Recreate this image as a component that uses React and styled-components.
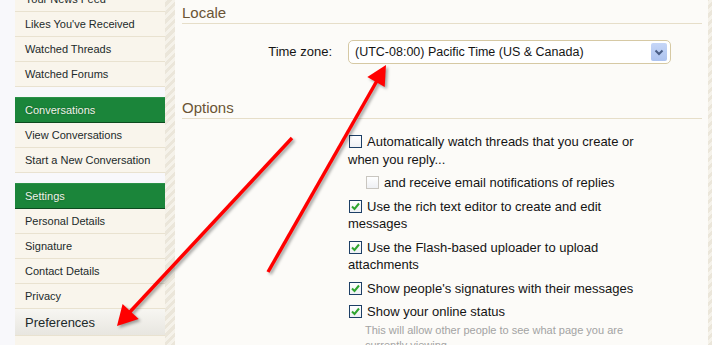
import React from "react";
import styled, { createGlobalStyle } from "styled-components";

// sidebar menu content
const sections = [
  {
    title: null,
    items: ["Your News Feed", "Likes You've Received", "Watched Threads", "Watched Forums"],
  },
  {
    title: "Conversations",
    items: ["View Conversations", "Start a New Conversation"],
  },
  {
    title: "Settings",
    items: ["Personal Details", "Signature", "Contact Details", "Privacy", "Preferences", ""],
  },
];

const options = [
  { text: "Automatically watch threads that you create or when you reply...", checked: false },
  { text: "and receive email notifications of replies", checked: false, nested: true },
  { text: "Use the rich text editor to create and edit messages", checked: true },
  { text: "Use the Flash-based uploader to upload attachments", checked: true },
  { text: "Show people's signatures with their messages", checked: true },
  {
    text: "Show your online status",
    checked: true,
    hint: "This will allow other people to see what page you are currently viewing.",
  },
];

const GlobalStyle = createGlobalStyle`
  html, body {
    margin: 0;
    padding: 0;
  }
  body {
    background: #f8f8fb;
    font-family: "Liberation Sans", Arial, sans-serif;
    overflow: hidden;
  }
`;

const Page = styled.div`
  position: relative;
  display: flex;
  height: 345px;
  padding-left: 15px;
  overflow: hidden;
`;

const Sidebar = styled.nav`
  width: 150px;
  flex-shrink: 0;
  margin-top: -13px;
`;

const Section = styled.ul`
  list-style: none;
  margin: 0 0 10px;
  padding: 0;
`;

const SectionHead = styled.li`
  height: 24px;
  line-height: 24px;
  padding-left: 10px;
  background: #1b853a;
  border-top: 1px solid #2a9147;
  border-bottom: 1px solid #0d4a1f;
  color: #eef4e8;
  font-size: 11px;
  text-shadow: 0 0 2px rgba(0, 0, 0, 0.35);
`;

const NavItem = styled.li`
  height: ${(p) => (p.$selected ? 26 : 24)}px;
  line-height: ${(p) => (p.$selected ? 27 : 24)}px;
  padding-left: 10px;
  border-bottom: 1px solid #e9e2d0;
  background: ${(p) =>
    p.$selected ? "linear-gradient(#f7f6f2, #e8e6e0)" : "#f9f5ec"};
  color: #1c2a2a;
  font-size: ${(p) => (p.$selected ? 13 : 11)}px;
  white-space: nowrap;
`;

const Stripe = styled.div`
  width: ${(p) => p.$w}px;
  flex-shrink: 0;
  background: repeating-linear-gradient(
    -45deg,
    #ebe6da 0 3px,
    #f5f2ea 3px 6px
  );
`;

const Main = styled.main`
  flex: 1;
  background: #fcfbf8;
  padding: 0 6px 0 7px;
`;

const Heading = styled.h3`
  margin: 0;
  padding: 3px 0 1px;
  line-height: 19px;
  font-size: 15px;
  font-weight: normal;
  color: #6a5434;
  border-bottom: 1px solid #e6dec9;
`;

const FormRow = styled.dl`
  display: grid;
  grid-template-columns: 150px 1fr;
  column-gap: 16px;
  margin: ${(p) => p.$margin};
`;

const Label = styled.dt`
  text-align: right;
  font-size: 13px;
  line-height: 24px;
  color: #141414;
`;

const Control = styled.dd`
  margin: 0;
`;

const Select = styled.div`
  box-sizing: border-box;
  width: 323px;
  height: 24px;
  display: flex;
  align-items: center;
  justify-content: space-between;
  padding: 0 3px 0 6px;
  border: 1px solid #d6c9a4;
  border-radius: 5px;
  background: #fff;
  font-size: 12.5px;
  color: #141414;
`;

const DropButton = styled.span`
  width: 16px;
  height: 18px;
  display: flex;
  align-items: center;
  justify-content: center;
  border-radius: 2px;
  background: linear-gradient(#c6d6f7, #adc3ef);
`;

const OptionList = styled.ul`
  list-style: none;
  margin: 0;
  padding: 0;
  max-width: 300px;
`;

const Option = styled.li`
  margin: 0 0 6px;
  padding-left: ${(p) => (p.$nested ? 17 : 0)}px;
  font-size: 13px;
  line-height: 17.5px;
  color: #141414;
`;

const Box = styled.span`
  display: inline-block;
  width: 11px;
  height: 11px;
  margin: 0 5px 0 1px;
  vertical-align: -2px;
  background: linear-gradient(#ffffff, #eef0f4);
  border: 1px solid ${(p) => (p.$disabled ? "#c9c6c0" : "#1d3f66")};
  position: relative;
`;

const Hint = styled.div`
  margin: 2px 0 0 17px;
  font-size: 11px;
  line-height: 15px;
  color: #a3a3a3;
`;

const Overlay = styled.svg`
  position: absolute;
  top: 0;
  left: 0;
  pointer-events: none;
  filter: drop-shadow(2px 2px 1.5px rgba(0, 0, 0, 0.35));
`;

function Check() {
  return (
    <svg width="11" height="11" viewBox="0 0 11 11" style={{ position: "absolute", top: 0, left: 0 }}>
      <path d="M2 5.5 L4.5 8 L9 2.5" fill="none" stroke="#2fa52f" strokeWidth="2" />
    </svg>
  );
}

function Chevron() {
  return (
    <svg width="10" height="7" viewBox="0 0 10 7">
      <path d="M1.5 1.5 L5 5 L8.5 1.5" fill="none" stroke="#4a5e86" strokeWidth="2" />
    </svg>
  );
}

export default function App() {
  return (
    <>
      <GlobalStyle />
      <Page>
        <Sidebar>
          {sections.map((s, i) => (
            <Section key={i}>
              {s.title && <SectionHead>{s.title}</SectionHead>}
              {s.items.map((item, j) => (
                <NavItem key={j} $selected={item === "Preferences"}>
                  {item}
                </NavItem>
              ))}
            </Section>
          ))}
        </Sidebar>
        <Stripe $w={10} />
        <Main>
          <Heading>Locale</Heading>
          <FormRow $margin="16px 0 31px">
            <Label>Time zone:</Label>
            <Control>
              <Select>
                (UTC-08:00) Pacific Time (US &amp; Canada)
                <DropButton>
                  <Chevron />
                </DropButton>
              </Select>
            </Control>
          </FormRow>
          <Heading>Options</Heading>
          <FormRow $margin="14px 0 0">
            <Label />
            <Control>
              <OptionList>
                {options.map((o) => (
                  <Option key={o.text} $nested={o.nested}>
                    <Box $disabled={o.nested}>{o.checked && <Check />}</Box>
                    {o.text}
                    {o.hint && <Hint>{o.hint}</Hint>}
                  </Option>
                ))}
              </OptionList>
            </Control>
          </FormRow>
        </Main>
        <Stripe $w={4} />
        <Overlay width="712" height="345" viewBox="0 0 712 345">
          <g stroke="#ff0000" strokeWidth="3.5" fill="#ff0000">
            <line x1="292" y1="138" x2="128" y2="314" />
            <polygon points="117,326 122.6,303.9 138.7,318.9" stroke="none" />
            <line x1="268" y1="272" x2="378" y2="79" />
            <polygon points="386,65 367.3,77 384.7,87" stroke="none" />
          </g>
        </Overlay>
      </Page>
    </>
  );
}
